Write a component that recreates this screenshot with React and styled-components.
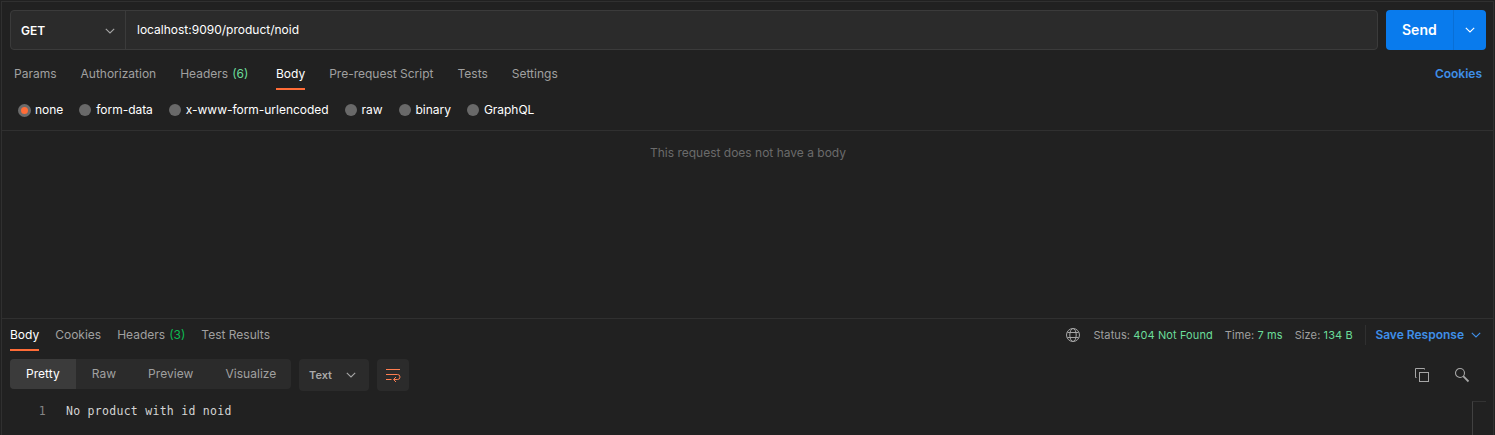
import React from "react";
import styled, { createGlobalStyle, css } from "styled-components";

const GlobalStyle = createGlobalStyle`
  *, *::before, *::after { box-sizing: border-box; }
  html, body { margin: 0; background: #212121; overflow: hidden; }
  body { font-family: Inter, "Liberation Sans", sans-serif; font-size: 12px; line-height: 16px; color: #fff; }
  button { font: inherit; border: 0; padding: 0; margin: 0; background: none; color: inherit; text-align: left; }
  svg { display: block; flex: none; }
`;

const Page = styled.main`
  height: 435px;
  padding: 1px 1px 0;
  display: flex;
  background: #212121;
`;

const Frame = styled.div`
  flex: 1;
  display: flex;
  flex-direction: column;
  border: 1px solid #303030;
  border-bottom: 0;
  min-width: 0;
`;

const RequestBar = styled.div`
  display: flex;
  gap: 8px;
  height: 48px;
  padding: 8px 7px 0 8px;
`;

const UrlBox = styled.div`
  flex: 1;
  display: flex;
  border: 1px solid #3b3b3b;
  border-radius: 4px;
  background: #2b2b2b;
`;

const Method = styled.button`
  width: 115px;
  display: flex;
  align-items: center;
  justify-content: space-between;
  padding: 2px 10px 0 10px;
  border-right: 1px solid #3b3b3b;
  font-weight: 600;
  color: #fff;
`;

const Url = styled.div`
  padding: 11px 11px;
  color: #fff;
`;

const SendGroup = styled.div`
  display: flex;
  width: 100px;
  border-radius: 4px;
  background: #097bed;
  overflow: hidden;
`;

const Send = styled.button`
  width: 68px;
  padding-left: 16px;
  font-size: 14px;
  font-weight: 600;
  border-right: 1px solid #096fd6;
`;

const SendMenu = styled.button`
  flex: 1;
  display: flex;
  align-items: center;
  justify-content: center;
`;

const RequestTabs = styled.nav`
  display: flex;
  height: 40px;
  padding: 8px 11px 0 12px;
  gap: 24px;
`;

const Tab = styled.button`
  height: 32px;
  padding-top: 8px;
  display: flex;
  gap: 4px;
  align-items: flex-start;
  white-space: nowrap;
  margin-right: ${(p) => p.$after || 0}px;
  color: ${(p) => (p.$active ? "#fff" : "#a0a0a0")};
  border-bottom: 2px solid ${(p) => (p.$active ? "#ff6c37" : "transparent")};
`;

const Count = styled.span`
  color: ${(p) => p.$color};
`;

const CookiesLink = styled.a`
  margin-left: auto;
  padding-top: 8px;
  font-weight: 600;
  color: #3f8fe8;
`;

const BodyTypes = styled.div`
  display: flex;
  align-items: center;
  gap: 16px;
  height: 41px;
  padding-left: 16px;
  border-bottom: 1px solid #303030;
`;

const Option = styled.label`
  display: flex;
  align-items: center;
  gap: ${(p) => p.$gap || 5}px;
  white-space: nowrap;
  letter-spacing: -0.03px;
`;

const Dot = styled.span`
  flex: none;
  width: 12px;
  height: 12px;
  border-radius: 50%;
  background: #696969;
  ${(p) =>
    p.$checked &&
    css`
      width: 13px;
      height: 13px;
      border: 3px solid #6b6b6b;
      background: #ff6c37;
    `}
`;

const EmptyBody = styled.section`
  height: 188px;
  padding-top: 14px;
  padding-left: 1px;
  text-align: center;
  color: #6b6b6b;
  border-bottom: 1px solid #303030;
`;

const ResponseHeader = styled.div`
  display: flex;
  height: 32px;
  padding: 0 12px 0 8px;
  gap: 16px;
`;

const ResponseTabs = styled.nav`
  display: flex;
  gap: 16px;
  letter-spacing: -0.03px;
`;

const Meta = styled.div`
  margin-left: auto;
  display: flex;
  align-items: center;
  height: 32px;
`;

const Stat = styled.span`
  margin-left: 12px;
  font-size: 11px;
  letter-spacing: 0.1px;
  white-space: nowrap;
  color: #a0a0a0;
  b { font-weight: 400; color: #6bdd9a; }
`;

const SaveResponse = styled.button`
  display: flex;
  align-items: center;
  gap: 7px;
  height: 20px;
  margin-left: 12.6px;
  padding-left: 9px;
  border-left: 1px solid #303030;
  font-weight: 600;
  color: #3f8fe8;
  white-space: nowrap;
`;

const Toolbar = styled.div`
  display: flex;
  gap: 8px;
  height: 50px;
  padding: 8px 23px 0 8px;
`;

const Views = styled.div`
  display: flex;
  width: 281px;
  height: 30px;
  border-radius: 4px;
  background: #2b2b2b;
  overflow: hidden;
`;

const View = styled.button`
  padding: 0 16px;
  letter-spacing: 0.04px;
  color: ${(p) => (p.$active ? "#fff" : "#a0a0a0")};
  background: ${(p) => (p.$active ? "#3b3b3b" : "transparent")};
`;

const Format = styled.button`
  display: flex;
  align-items: center;
  justify-content: space-between;
  width: 70px;
  height: 32px;
  padding: 0 13px 0 10px;
  border-radius: 4px;
  background: #2b2b2b;
  color: #a9a9a9;
  font-size: 11px;
  font-weight: 600;
`;

const WrapButton = styled.button`
  display: flex;
  align-items: center;
  justify-content: center;
  width: 32px;
  height: 32px;
  border-radius: 4px;
  background: #2b2b2b;
`;

const Actions = styled.div`
  display: flex;
  align-items: center;
  gap: 24px;
  height: 32px;
  margin-left: auto;
`;

const Editor = styled.div`
  flex: 1;
  display: flex;
  font: 11.5px/20px "DejaVu Sans Mono", "Liberation Mono", monospace;
  letter-spacing: 0.28px;
`;

const LineNumber = styled.span`
  width: 44px;
  text-align: right;
  color: #858585;
`;

const Line = styled.span`
  margin-left: 20px;
  white-space: pre;
  color: #d4d4d4;
`;

const Minimap = styled.div`
  width: 14px;
  margin-left: auto;
  margin-right: 7px;
  border-left: 1px solid #414141;
  border-top: 1px solid #333;
`;

const Chevron = ({ color = "#a6a6a6", size = 10 }) => (
  <svg width={size} height="6" viewBox="0 0 10 6" fill="none" stroke={color} strokeWidth="1.1">
    <path d="M.8.8 5 5 9.2.8" />
  </svg>
);

const Globe = () => (
  <svg width="16" height="16" viewBox="0 0 16 16" fill="none" stroke="#a6a6a6">
    <circle cx="8" cy="8" r="6.5" />
    <ellipse cx="8" cy="8" rx="3.2" ry="6.5" />
    <path d="M2.4 5.5h11.2M2.4 10.5h11.2" />
  </svg>
);

const WrapIcon = () => (
  <svg width="16" height="16" viewBox="0 0 16 16" fill="none" stroke="#ff7e50">
    <path d="M1 2.5h14M1 7.5h11.5a2.5 2.5 0 0 1 0 5H9M1 12.5h5.5M11 10l-2.5 2.5L11 15" />
  </svg>
);

const CopyIcon = () => (
  <svg width="16" height="16" viewBox="0 0 16 16" fill="none" stroke="#a6a6a6">
    <path d="M10.5 2.5v-1h-9v9h1" />
    <rect x="5.5" y="5.5" width="9" height="9" />
  </svg>
);

const SearchIcon = () => (
  <svg width="16" height="16" viewBox="0 0 16 16" fill="none" stroke="#a6a6a6">
    <circle cx="6" cy="6" r="4.5" strokeWidth="1.1" />
    <path d="M9.2 9.2 14.5 14.5" strokeWidth="1.8" />
  </svg>
);

const options = ["none", "form-data", "x-www-form-urlencoded", "raw", "binary", "GraphQL"];

export default function App() {
  return (
    <Page>
      <GlobalStyle />
      <Frame>
        <RequestBar>
          <UrlBox>
            <Method>GET <Chevron /></Method>
            <Url>localhost:9090/product/noid</Url>
          </UrlBox>
          <SendGroup>
            <Send>Send</Send>
            <SendMenu><Chevron color="#fff" /></SendMenu>
          </SendGroup>
        </RequestBar>
        <RequestTabs>
          <Tab>Params</Tab>
          <Tab>Authorization</Tab>
          <Tab $after={3.6}>Headers <Count $color="#6bdd9a">(6)</Count></Tab>
          <Tab $active>Body</Tab>
          <Tab>Pre-request Script</Tab>
          <Tab>Tests</Tab>
          <Tab>Settings</Tab>
          <CookiesLink>Cookies</CookiesLink>
        </RequestTabs>
        <BodyTypes>
          {options.map((name, i) => (
            <Option key={name} $gap={i === 0 ? 4 : 5}>
              <Dot $checked={i === 0} />
              {name}
            </Option>
          ))}
        </BodyTypes>
        <EmptyBody>This request does not have a body</EmptyBody>
        <ResponseHeader>
          <ResponseTabs>
            <Tab $active>Body</Tab>
            <Tab>Cookies</Tab>
            <Tab>Headers <Count $color="#0cbb52">(3)</Count></Tab>
            <Tab>Test Results</Tab>
          </ResponseTabs>
          <Meta>
            <Globe />
            <Stat>Status: <b>404 Not Found</b></Stat>
            <Stat>Time: <b>7 ms</b></Stat>
            <Stat>Size: <b>134 B</b></Stat>
            <SaveResponse>Save Response <Chevron color="#3f8fe8" /></SaveResponse>
          </Meta>
        </ResponseHeader>
        <Toolbar>
          <Views>
            <View $active>Pretty</View>
            <View>Raw</View>
            <View>Preview</View>
            <View>Visualize</View>
          </Views>
          <Format>Text <Chevron /></Format>
          <WrapButton><WrapIcon /></WrapButton>
          <Actions><CopyIcon /><SearchIcon /></Actions>
        </Toolbar>
        <Editor>
          <LineNumber>1</LineNumber>
          <Line>No product with id noid</Line>
          <Minimap />
        </Editor>
      </Frame>
    </Page>
  );
}
